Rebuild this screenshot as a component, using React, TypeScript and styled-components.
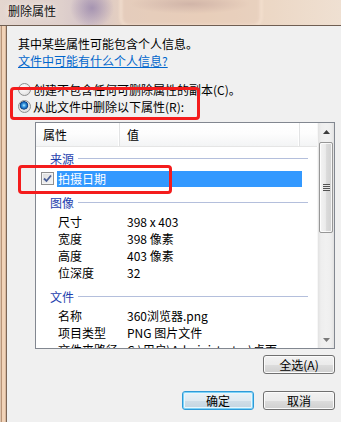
import React from "react";
import styled, { createGlobalStyle } from "styled-components";

const Global = createGlobalStyle`
  html, body { margin: 0; padding: 0; background: #f0f0f0; }
  body {
    font-family: "Noto Sans CJK SC", "Noto Sans", sans-serif;
    font-size: 12px;
    color: #000;
  }
  * { box-sizing: border-box; }
`;

const Window = styled.div`
  position: relative;
  width: 341px;
  height: 422px;
  overflow: hidden;
  display: flex;
  flex-direction: column;
  background: #f0f0f0;
`;

const TitleBar = styled.div`
  position: relative;
  flex: none;
  height: 26px;
  display: flex;
  align-items: center;
  padding: 0 0 3px 8px;
  overflow: hidden;
  border-bottom: 1px solid #6f5e52;
  background:
    radial-gradient(ellipse 22px 20px at 92px 8px, rgba(150, 132, 170, 0.75), rgba(150, 132, 170, 0) 100%),
    radial-gradient(ellipse 60px 10px at 190px 4px, rgba(170, 140, 140, 0.55), rgba(170, 140, 140, 0) 100%),
    linear-gradient(90deg, #e4d6cf 0%, #dfd0cc 18%, #d4c4c8 26%, #e6d0c0 36%, #ecd3bd 60%, #ecd8c6 80%, #efe0d2 100%);
  &::after {
    content: "";
    position: absolute;
    left: 120px;
    top: -12px;
    width: 138px;
    height: 35px;
    border-radius: 9px;
    border: 2px solid rgba(250, 232, 218, 0.8);
    background: rgba(225, 198, 180, 0.35);
    filter: blur(1.5px);
  }
`;

const TitleText = styled.span`
  position: relative;
  z-index: 1;
  font-size: 12px;
  line-height: 14px;
  color: #111;
  text-shadow: 0 0 6px rgba(255, 255, 255, 0.9);
`;

const Body = styled.div`
  flex: 1;
  display: flex;
  min-height: 0;
`;

const LeftFrame = styled.div`
  flex: none;
  width: 7px;
  background: linear-gradient(
    90deg,
    #dcc4ae 0 1px,
    #b89478 1px 2px,
    #f1d3b8 2px 5px,
    #d8b89e 5px 6px,
    #7b6656 6px 7px
  );
`;

const Content = styled.div`
  flex: 1;
  display: flex;
  flex-direction: column;
  padding: 9px 6px 0 11px;
  background: #f0f0f0;
  min-width: 0;
`;

const Line = styled.div`
  line-height: 17px;
  height: 17px;
  white-space: nowrap;
`;

const LinkText = styled.a`
  color: #0066cc;
  text-decoration: underline;
  line-height: 17px;
  height: 17px;
  white-space: nowrap;
  align-self: flex-start;
  cursor: pointer;
`;

const RadioGroup = styled.div`
  margin-top: 12px;
  display: flex;
  flex-direction: column;
`;

const RadioRow = styled.label`
  display: flex;
  align-items: center;
  gap: 2px;
  height: 17px;
  white-space: nowrap;
`;

const RadioCircle = styled.span<{ $checked?: boolean }>`
  flex: none;
  width: 13px;
  height: 13px;
  border-radius: 50%;
  border: 1px solid #8e8f8f;
  background: ${(p) =>
    p.$checked
      ? "radial-gradient(circle at 45% 40%, #c9f1ff 0, #4aa9ea 1.4px, #1462b2 3.2px, #0b3f80 3.9px, rgba(200,200,200,0.9) 4.4px, rgba(0,0,0,0) 5px), radial-gradient(circle at 40% 35%, #ffffff 0, #e6e6e6 60%, #cfcfcf 100%)"
      : "radial-gradient(circle at 40% 35%, #ffffff 0, #ececec 55%, #d2d2d2 100%)"};
`;

const ListBox = styled.div`
  margin: 7px 0 0 17px;
  width: 300px;
  height: 227px;
  flex: none;
  border: 1px solid #828790;
  background: #fff;
  display: flex;
  overflow: hidden;
`;

const ListMain = styled.div`
  flex: 1;
  display: flex;
  flex-direction: column;
  overflow: hidden;
  min-width: 0;
`;

const Header = styled.div`
  flex: none;
  display: flex;
  height: 24px;
  border-bottom: 1px solid #e5e5e5;
  background: linear-gradient(#ffffff 0%, #fdfdfd 45%, #f3f4f5 100%);
`;

const HeaderCell = styled.div<{ $w?: number }>`
  flex: ${(p) => (p.$w ? `0 0 ${p.$w}px` : "1")};
  padding-left: 7px;
  line-height: 23px;
  border-right: ${(p) => (p.$w ? "1px solid #e2e3e4" : "none")};
  box-shadow: ${(p) => (p.$w ? "inset -1px 0 0 #ffffff" : "none")};
  white-space: nowrap;
`;

const Rows = styled.div`
  flex: 1;
  display: flex;
  flex-direction: column;
  overflow: hidden;
`;

const GroupHeader = styled.div<{ $mt: number }>`
  flex: none;
  margin-top: ${(p) => p.$mt}px;
  height: 21px;
  display: flex;
  align-items: center;
  gap: 4px;
  padding: 0 9px 1px 14px;
  color: #1e3fae;
  white-space: nowrap;
`;

const GroupLine = styled.span`
  flex: 1;
  height: 1px;
  background: #b4bfdc;
`;

const ItemRow = styled.div<{ $mt?: number }>`
  flex: none;
  margin-top: ${(p) => p.$mt ?? 0}px;
  height: 17px;
  display: flex;
  align-items: center;
  padding-left: 22px;
  white-space: nowrap;
`;

const CheckRow = styled(ItemRow)`
  padding-left: 5px;
  gap: 3px;
`;

const CheckBox = styled.span`
  flex: none;
  width: 13px;
  height: 13px;
  border: 1px solid #8f8f8f;
  background: linear-gradient(135deg, #dcdcdc, #f6f6f6);
  box-shadow: inset 0 0 0 1px #f4f4f4;
  display: flex;
  align-items: center;
  justify-content: center;
`;

const Selected = styled.div`
  width: 245px;
  height: 16px;
  display: flex;
  align-items: center;
  padding-left: 1px;
  background: #3399ff;
  color: #fff;
`;

const Label = styled.span`
  flex: 0 0 69px;
`;

const Value = styled.span`
  flex: 1;
`;

const ScrollBar = styled.div`
  flex: 0 0 17px;
  display: flex;
  flex-direction: column;
  background: linear-gradient(90deg, #e2e2e2 0, #eeeeee 3px, #f1f1f1 50%, #eeeeee calc(100% - 3px), #e2e2e2 100%);
  border-left: 1px solid #f7f7f7;
`;

const ArrowBtn = styled.div`
  flex: none;
  height: 17px;
  display: flex;
  align-items: center;
  justify-content: center;
`;

const Track = styled.div`
  flex: 1;
  display: flex;
  flex-direction: column;
  padding: 2px 1px 0 1px;
`;

const Thumb = styled.div`
  flex: none;
  height: 91px;
  border: 1px solid #979797;
  border-radius: 2px;
  background: linear-gradient(90deg, #f3f3f3 0%, #ebebeb 45%, #dadada 55%, #d2d2d2 100%);
  box-shadow: inset 0 0 0 1px rgba(255, 255, 255, 0.8);
  display: flex;
  align-items: center;
  justify-content: center;
`;

const Grip = styled.div`
  width: 7px;
  height: 7px;
  background: repeating-linear-gradient(#535353 0 1px, #e8e8e8 1px 2px);
`;

const ButtonRow = styled.div<{ $mt: number }>`
  display: flex;
  justify-content: flex-end;
  gap: 9px;
  margin-top: ${(p) => p.$mt}px;
`;

const Button = styled.button<{ $default?: boolean }>`
  width: 72px;
  height: 19px;
  padding: 0;
  font-family: "Noto Sans CJK SC", "Noto Sans", sans-serif;
  font-size: 12px;
  line-height: 16px;
  color: #000;
  border-radius: 3px;
  border: 1px solid ${(p) => (p.$default ? "#2e9ad8" : "#707070")};
  background: ${(p) =>
    p.$default
      ? "linear-gradient(#eaf2f7 0%, #dfeaf1 50%, #cfdee8 51%, #c2d4e0 100%)"
      : "linear-gradient(#f2f2f2 0%, #ebebeb 50%, #dddddd 51%, #cfcfcf 100%)"};
  box-shadow: ${(p) =>
    p.$default ? "inset 0 0 0 1px #7fd3f7, inset 0 0 0 2px #e9f6fc" : "inset 0 0 0 1px #fbfbfb"};
  cursor: default;
`;

const RedBox = styled.div<{ $l: number; $t: number; $w: number; $h: number }>`
  position: absolute;
  left: ${(p) => p.$l}px;
  top: ${(p) => p.$t}px;
  width: ${(p) => p.$w}px;
  height: ${(p) => p.$h}px;
  border: 3px solid #f41c1c;
  border-radius: 4px;
  pointer-events: none;
`;

const UpArrow = () => (
  <svg width="7" height="4" viewBox="0 0 7 4">
    <path d="M3.5 0 L7 4 L0 4 Z" fill="#3c3c3c" />
  </svg>
);

const DownArrow = () => (
  <svg width="7" height="4" viewBox="0 0 7 4">
    <path d="M0 0 L7 0 L3.5 4 Z" fill="#7a7a7a" />
  </svg>
);

const Check = () => (
  <svg width="9" height="9" viewBox="0 0 9 9">
    <path d="M1 4.5 L3.5 7 L8 1.5" fill="none" stroke="#4a5f97" strokeWidth="1.8" />
  </svg>
);

type Item = { label: string; value: string };

const imageItems: Item[] = [
  { label: "尺寸", value: "398 x 403" },
  { label: "宽度", value: "398 像素" },
  { label: "高度", value: "403 像素" },
  { label: "位深度", value: "32" },
];

const fileItems: Item[] = [
  { label: "名称", value: "360浏览器.png" },
  { label: "项目类型", value: "PNG 图片文件" },
  { label: "文件夹路径", value: "C:\\用户\\Administrator\\桌面" },
];

export default function App() {
  return (
    <>
      <Global />
      <Window>
        <TitleBar>
          <TitleText>删除属性</TitleText>
        </TitleBar>
        <Body>
          <LeftFrame />
          <Content>
            <Line>其中某些属性可能包含个人信息。</Line>
            <LinkText>文件中可能有什么个人信息?</LinkText>
            <RadioGroup>
              <RadioRow>
                <RadioCircle />
                <span>创建不包含任何可删除属性的副本(C)。</span>
              </RadioRow>
              <RadioRow>
                <RadioCircle $checked />
                <span>从此文件中删除以下属性(R):</span>
              </RadioRow>
            </RadioGroup>
            <ListBox>
              <ListMain>
                <Header>
                  <HeaderCell $w={84}>属性</HeaderCell>
                  <HeaderCell $w={180}>值</HeaderCell>
                  <HeaderCell />
                </Header>
                <Rows>
                  <GroupHeader $mt={1}>
                    来源
                    <GroupLine />
                  </GroupHeader>
                  <CheckRow $mt={1}>
                    <CheckBox>
                      <Check />
                    </CheckBox>
                    <Selected>拍摄日期</Selected>
                  </CheckRow>
                  <GroupHeader $mt={5}>
                    图像
                    <GroupLine />
                  </GroupHeader>
                  {imageItems.map((it) => (
                    <ItemRow key={it.label}>
                      <Label>{it.label}</Label>
                      <Value>{it.value}</Value>
                    </ItemRow>
                  ))}
                  <GroupHeader $mt={5}>
                    文件
                    <GroupLine />
                  </GroupHeader>
                  {fileItems.map((it) => (
                    <ItemRow key={it.label}>
                      <Label>{it.label}</Label>
                      <Value>{it.value}</Value>
                    </ItemRow>
                  ))}
                </Rows>
              </ListMain>
              <ScrollBar>
                <ArrowBtn>
                  <UpArrow />
                </ArrowBtn>
                <Track>
                  <Thumb>
                    <Grip />
                  </Thumb>
                </Track>
                <ArrowBtn>
                  <DownArrow />
                </ArrowBtn>
              </ScrollBar>
            </ListBox>
            <ButtonRow $mt={6}>
              <Button>全选(A)</Button>
            </ButtonRow>
            <ButtonRow $mt={17}>
              <Button $default>确定</Button>
              <Button>取消</Button>
            </ButtonRow>
          </Content>
        </Body>
        <RedBox $l={10} $t={87} $w={190} $h={33} />
        <RedBox $l={18} $t={165} $w={154} $h={29} />
      </Window>
    </>
  );
}
